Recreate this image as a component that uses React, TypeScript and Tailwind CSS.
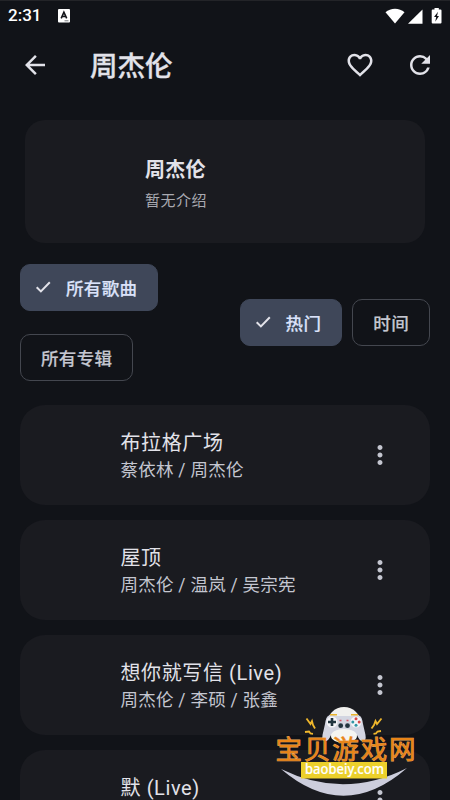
import React, { useState } from "react";
import {
  MdArrowBack,
  MdFavoriteBorder,
  MdMoreVert,
  MdRefresh,
} from "react-icons/md";
import clsx from "clsx";

interface Song {
  title: string;
  artists: string[];
}

interface ChipProps {
  label: string;
  selected: boolean;
  onClick: () => void;
}

const songs: Song[] = [
  { title: "布拉格广场", artists: ["蔡依林", "周杰伦"] },
  { title: "屋顶", artists: ["周杰伦", "温岚", "吴宗宪"] },
  { title: "想你就写信 (Live)", artists: ["周杰伦", "李硕", "张鑫"] },
  { title: "默 (Live)", artists: [] },
];

const StatusBar: React.FC = () => (
  <div className="h-[30px] flex items-center justify-between border-t border-[#232428] pl-2 pr-[8px] text-white">
    <div className="flex items-center">
      <span className="w-[50px] text-[17px] font-medium leading-none">2:31</span>
      <svg width="12" height="14" viewBox="0 0 12 14">
        <rect width="12" height="13.5" rx="1" fill="#fff" />
        <path
          d="M3.2 9.4 5.9 3.2l2.8 6.2M4.2 7.5h3.5"
          fill="none"
          stroke="#111318"
          strokeWidth="1.6"
        />
        <path d="M6.5 11.8h4" stroke="#77797e" strokeWidth="1" />
      </svg>
    </div>
    <svg width="57" height="18" viewBox="0 0 57 18" fill="#fff">
      <path d="M0.5 5.2C5.5 0.5 14.5 0.5 19.5 5.2L10 16.6z" />
      <path d="M37.5 2.5v14.2H23z" />
      <path d="M49.5 1h4.3v1.6h1.7q1 0 1 1v12q0 1-1 1h-7.8q-1 0-1-1v-12q0-1 1-1h1.8z" />
      <path d="M53 4.7 49 10h2.2l-1 4.7L54 9h-2z" fill="#111318" />
    </svg>
  </div>
);

const Chip: React.FC<ChipProps> = ({ label, selected, onClick }) => (
  <button
    onClick={onClick}
    className={clsx(
      "h-[47.5px] flex items-center rounded-[10px] border text-[17.5px] font-medium tracking-[0.35px] leading-none whitespace-nowrap [-webkit-text-stroke:0.2px]",
      selected
        ? "border-[#3f4759] bg-[#3f4759] pl-[12px] pr-[20px] text-[#dbe2f9]"
        : "border-[#44474f] px-[20px] text-[#c4c6d0]"
    )}
  >
    {selected && (
      <svg
        className="mr-[13px]"
        width="20"
        height="20"
        viewBox="0 0 20 20"
        fill="none"
        stroke="#e2e2e9"
        strokeWidth="2"
      >
        <path d="m3.700 10.200 4.200 4.200 8.900-9.200" />
      </svg>
    )}
    <span className="pt-[5px]">{label}</span>
  </button>
);

const SongCard: React.FC<{ song: Song }> = ({ song }) => (
  <div className="h-[100px] shrink-0 flex items-center rounded-[25px] bg-[#1a1b20] pl-[100.5px] pr-[35px]">
    <div className="flex-1">
      <p className="text-[20px] leading-[30px] tracking-[0.6px] text-[#e2e2e9]">
        {song.title}
      </p>
      <p className="h-[25px] text-[17.5px] leading-[25px] tracking-[0.25px] text-[#c4c6d0]">
        {song.artists.join(" / ")}
      </p>
    </div>
    <MdMoreVert className="size-[30px] text-[#c4c6d0]" />
  </div>
);

// Site badge with the game controller mascot
const Watermark: React.FC = () => (
  <svg
    className="absolute left-[270px] top-[700px]"
    width="150"
    height="100"
    viewBox="270 700 150 100"
  >
    <circle cx="344" cy="724" r="17" fill="#f1f0ee" />
    <path
      d="M328 716q3-2 8 0h16q5-2 8 0 2 1 3 8l2.5 11q1 6-3 6-3 0-5-5-3-6-8-6h-11q-5 0-8 6-2 5-5 5-4 0-3-6l2.5-11q1-7 3-8z"
      fill="#d3d5e1"
    />
    <ellipse cx="344" cy="736" rx="13" ry="7" fill="#f5f5f2" />
    <path d="M330 714.8h7M351 714.8h7" stroke="#e9b32c" strokeWidth="1.5" />
    <circle cx="332" cy="722" r="5.5" fill="#f4f4f8" />
    <circle cx="356" cy="722" r="5.5" fill="#f4f4f8" />
    <path d="M332 718v8M328 722h8" stroke="#20343f" strokeWidth="2.6" />
    <circle cx="356" cy="718.8" r="1.5" fill="#d84848" />
    <circle cx="356" cy="725.2" r="1.5" fill="#3196a5" />
    <circle cx="352.8" cy="722" r="1.5" fill="#3196a5" />
    <circle cx="359.2" cy="722" r="1.5" fill="#d84848" />
    <circle cx="340.7" cy="725.7" r="2.4" fill="#22343f" />
    <circle cx="347.5" cy="725.7" r="2.4" fill="#22343f" />
    <path d="M339.5 720.5h2M346.5 720.5h2" stroke="#d75666" strokeWidth="1.6" />
    <g fill="none" stroke="#efb72c" strokeWidth="1.8">
      <path d="m306.5 718.5 4 5.500 1.500-3 1 4 2 3.500" />
      <path d="m381.5 718.5-4.500 5.500-1.500-3-1.500 4-2.500 3.500" />
      <path d="m305 732 4-.5 1.5 2 2.500.3M381 731l-3.500.5-1.500 2-2.500.3" />
    </g>
    <path d="M281 769Q344 800 407 768Q344 823 281 769z" fill="#cccddc" />
    <rect x="301" y="762" width="86" height="16.5" fill="#ecd02b" />
    <text
      x="305"
      y="774"
      textLength="79"
      lengthAdjust="spacingAndGlyphs"
      fontFamily="'Noto Sans', sans-serif"
      fontSize="14"
      fontWeight="500"
      fill="#fff"
      stroke="#fff"
      strokeWidth="0.2"
    >
      baobeiy.com
    </text>
    <text
      x="275.5"
      y="758.5"
      textLength="140"
      fontFamily="'Noto Sans CJK SC', sans-serif"
      fontSize="26.5"
      fontWeight="400"
      fill="#e98518"
      stroke="#eda85c"
      strokeWidth="0.8"
      paintOrder="stroke"
    >
      宝贝游戏网
    </text>
  </svg>
);

const App: React.FC = () => {
  const [category, setCategory] = useState<string>("所有歌曲");
  const [order, setOrder] = useState<string>("热门");

  return (
    <div className="relative w-[450px] h-[800px] overflow-hidden bg-[#111318] font-[Roboto,'Noto_Sans_CJK_SC',sans-serif] text-[#e2e2e9]">
      <StatusBar />
      <header className="h-[70px] flex items-center px-[20px]">
        <MdArrowBack className="size-[30px]" />
        <h1 className="ml-[40px] flex-1 pt-[4px] text-[27.5px] font-medium leading-none [-webkit-text-stroke:0.3px]">
          周杰伦
        </h1>
        <MdFavoriteBorder className="size-[30px]" />
        <MdRefresh className="ml-[30px] -mr-[5px] size-[30px]" />
      </header>

      <section className="mx-[25px] mt-[20px] h-[122.5px] flex flex-col justify-center rounded-[20px] bg-[#1a1b20] pt-[6px] pl-[120px]">
        <h2 className="text-[20px] font-bold leading-[30px] tracking-[0.2px]">
          周杰伦
        </h2>
        <p className="mt-[4px] text-[15px] leading-[24px] tracking-[0.5px] text-[#a9aab1]">
          暂无介绍
        </p>
      </section>

      <div className="mt-[21px] flex items-center justify-between px-[20px]">
        <div className="flex flex-col items-start gap-[22.5px]">
          {["所有歌曲", "所有专辑"].map((label) => (
            <Chip
              key={label}
              label={label}
              selected={category === label}
              onClick={() => setCategory(label)}
            />
          ))}
        </div>
        <div className="flex gap-[10px]">
          {["热门", "时间"].map((label) => (
            <Chip
              key={label}
              label={label}
              selected={order === label}
              onClick={() => setOrder(label)}
            />
          ))}
        </div>
      </div>

      <div className="mt-[24px] flex flex-col gap-[15px] px-[20px]">
        {songs.map((song) => (
          <SongCard key={song.title} song={song} />
        ))}
      </div>
      <Watermark />
    </div>
  );
};

export default App;
